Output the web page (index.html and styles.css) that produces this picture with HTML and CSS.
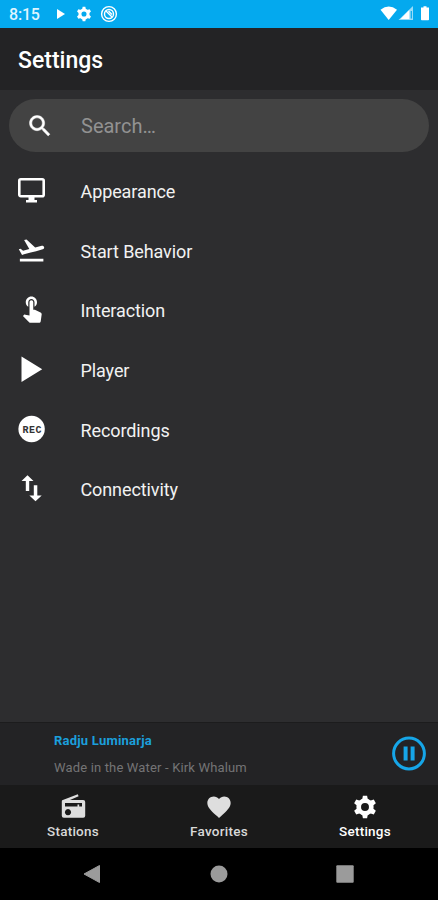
FILE: index.html
```html
<!DOCTYPE html>
<html lang="en">
<head>
<meta charset="utf-8">
<title>Settings</title>
<link rel="stylesheet" href="styles.css">
</head>
<body>
<div class="screen">
  <div class="status">
    <span class="clock">8:15</span>
    <svg class="s-play" width="10" height="12" viewBox="0 0 10 12"><path d="M1 1v10l8-5z"/></svg>
    <svg class="s-gear" width="18" height="18" viewBox="0 0 24 24"><use href="#gear"/></svg>
    <svg class="s-dnd" width="18" height="18" viewBox="0 0 18 18"><g fill="none" stroke="#fff"><circle cx="9" cy="9" r="7.400" stroke-width="1.400"/><circle cx="9" cy="9" r="4.500" stroke-width="1.400"/><path d="M6 6l6 6M8.500 6l3.500 3.500" stroke-width="1.400"/></g></svg>
    <svg class="s-signal" width="52" height="18" viewBox="0 0 52 18"><path d="M.5 4.800Q8.700-1.600 17 4.800L8.700 15z"/><path d="M33 1v14H18.500z" opacity=".6"/><path d="M29.300 5v9H20.500z"/><path d="M31.300 6v7.500" stroke="#04a9ee" stroke-width="1.200"/><path d="M41 2.600h2.500V1.200h3v1.400H49v11.900q0 .8-.8.800h-6.400q-.8 0-.8-.8z"/></svg>
  </div>
  <header class="header"><h1>Settings</h1></header>
  <main class="content">
    <div class="search">
      <svg width="28" height="28" viewBox="0 0 24 24"><path stroke="#fff" stroke-width=".4" d="M15.500 14h-.79l-.28-.27C15.410 12.590 16 11.110 16 9.500 16 5.910 13.090 3 9.500 3S3 5.910 3 9.500 5.910 16 9.500 16c1.610 0 3.090-.59 4.230-1.570l.27.28v.79l5 4.990L20.490 19l-4.990-5zm-6 0C7.010 14 5 11.990 5 9.500S7.010 5 9.500 5 14 7.010 14 9.500 11.990 14 9.500 14z"/></svg>
      <span>Search…</span>
    </div>
    <ul class="list">
      <li><svg width="30" height="30" viewBox="0 0 30 30"><rect x="3.300" y="4.300" width="24.400" height="17" rx="1.500" fill="none" stroke="#fff" stroke-width="2.600"/><path d="M12.500 22h6v3h2.500v2.400H10V25h2.500z"/></svg><span>Appearance</span></li>
      <li><svg width="30" height="30" viewBox="0 0 24 24"><path transform="translate(.4)" d="M2.700 19h18.800v2.100H2.700zm19.370-9.360c-.21-.8-1.040-1.280-1.840-1.060L14.920 10l-6.900-6.430-1.930.51 4.140 7.170-4.970 1.330-1.970-1.540-1.450.39 1.820 3.160.77 1.330 1.600-.43 5.310-1.420 4.350-1.160L21 11.490c.81-.23 1.280-1.050 1.070-1.850z"/></svg><span>Start Behavior</span></li>
      <li><svg width="30" height="30" viewBox="0 0 24 24"><path transform="translate(.8 -1)" d="M9 11.240V7.500C9 6.120 10.120 5 11.500 5S14 6.120 14 7.500v3.740c1.210-.81 2-2.180 2-3.740C16 5.010 13.990 3 11.500 3S7 5.010 7 7.500c0 1.560.79 2.930 2 3.740zm9.840 4.630l-4.540-2.260c-.17-.07-.35-.11-.54-.11H13v-6c0-.83-.67-1.500-1.500-1.500S10 6.670 10 7.500v10.740l-3.430-.72c-.08-.01-.15-.03-.24-.03-.31 0-.59.13-.79.33l-.79.8 4.940 4.940c.27.27.65.44 1.060.44h6.790c.75 0 1.330-.55 1.440-1.280l.75-5.270c.01-.07.02-.14.02-.2 0-.62-.38-1.160-.91-1.380z"/></svg><span>Interaction</span></li>
      <li><svg width="30" height="30" viewBox="0 0 30 30"><path d="M5.500 2.500v25.600L26.200 15.300z"/></svg><span>Player</span></li>
      <li><svg width="30" height="30" viewBox="0 0 30 30"><circle cx="15.600" cy="15" r="13.200"/><text class="rec" x="15.900" y="18.800" text-anchor="middle" textLength="19" lengthAdjust="spacing">REC</text></svg><span>Recordings</span></li>
      <li><svg width="30" height="30" viewBox="0 0 30 30"><path d="M11.500 2.200l6 5.700h-4.300v10.100H9.800V7.900H5.500zM17.800 12.300h3.500v10.100h4.400L19.500 28.300l-6.100-5.900h4.400z"/></svg><span>Connectivity</span></li>
    </ul>
  </main>
  <section class="player">
    <div class="track"><div class="station">Radju Luminarja</div><div class="song">Wade in the Water - Kirk Whalum</div></div>
    <svg width="36" height="36" viewBox="0 0 36 36"><circle cx="18" cy="17.500" r="15.400" fill="none" stroke="#16a6e8" stroke-width="3"/><path fill="#16a6e8" d="M12.600 10.500h4v14h-4zM19.600 10.500h4v14h-4z"/></svg>
  </section>
  <nav class="tabs">
    <div class="tab"><svg width="28" height="28" viewBox="0 0 28 28"><path fill-rule="evenodd" d="M3.200 7.200L18.800 1.200l.8 2-8.600 3.800h13.200q2 0 2 2v13.700q0 2-2 2H4.800q-2 0-2-2V8.800q0-1.200.4-1.600zM6 10v3.400h12.500v-1.900h1.700v1.900H23V10zM9 16.100a3.100 3.100 0 1 0 .01 0z"/></svg><span>Stations</span></div>
    <div class="tab"><svg width="28" height="28" viewBox="0 0 24 24"><path d="M12 21.350l-1.450-1.320C5.400 15.360 2 12.280 2 8.500 2 5.420 4.420 3 7.500 3c1.740 0 3.410.81 4.500 2.090C13.090 3.810 14.760 3 16.500 3 19.580 3 22 5.420 22 8.500c0 3.780-3.400 6.860-8.550 11.540L12 21.350z"/></svg><span>Favorites</span></div>
    <div class="tab active"><svg width="28" height="28" viewBox="0 0 24 24"><g id="gear"><circle cx="12" cy="12" r="5.400" fill="none" stroke="#fff" stroke-width="4"/><path id="teeth" d="M10.200 2.300h3.600l.9 4.700H9.300zM10.200 21.700h3.600l.9-4.700H9.300z"/><use href="#teeth" transform="rotate(60 12 12)"/><use href="#teeth" transform="rotate(120 12 12)"/></g></svg><span>Settings</span></div>
  </nav>
  <div class="sysnav">
    <svg width="20" height="20" viewBox="0 0 20 20"><path d="M2 10l15.500-8.500v17z" stroke="#9b9b9b" stroke-linejoin="round"/></svg>
    <svg width="20" height="20" viewBox="0 0 20 20"><circle cx="10" cy="10" r="8.500"/></svg>
    <svg width="20" height="20" viewBox="0 0 20 20"><rect x="1.300" y="1.300" width="17.400" height="17.400" rx="1"/></svg>
  </div>
</div>
</body>
</html>
```
FILE: styles.css
```css
* { box-sizing: border-box; margin: 0; padding: 0; }
body { background: #2d2d2f; font-family: Roboto, sans-serif; color: #f2f2f2; }
svg { display: block; flex: none; fill: #fff; }
.screen { width: 438px; height: 900px; display: flex; flex-direction: column; overflow: hidden; }

.status { height: 28px; background: #04a9ee; display: flex; align-items: center; padding: 0 8px 0 9px; }
.clock { width: 46px; font-size: 16px; font-weight: 500; letter-spacing: -.2px; color: #dff5ff; }
.s-play { margin-left: 1px; }
.s-gear { margin-left: 9px; }
.s-dnd { margin-left: 7px; }
.s-signal { margin-left: auto; margin-right: -2px; }

.header { height: 62px; background: #232325; display: flex; align-items: center; padding: 3px 18px 0; }
.header h1 { font-size: 23px; font-weight: 500; line-height: 28px; color: #fff; }

.content { flex: 1; padding: 9px 9px 0; }
.search { height: 53px; border-radius: 27px; background: #434343; display: flex; align-items: center; padding-left: 17px; }
.search span { margin-left: 27px; font-size: 20px; color: #929292; }
.list { list-style: none; padding-top: 9px; }
.list li { height: 59.600px; display: flex; align-items: center; padding-left: 7px; }
.list li svg { margin-top: -1px; }
.list li span { margin-left: 34.500px; font-size: 18px; letter-spacing: -.1px; padding-top: 2px; }
.rec { font: bold 10px "Liberation Mono", monospace; fill: #333; }

.player { height: 63px; background: #232325; border-top: 1px solid #1c1c1d; display: flex; align-items: center; justify-content: space-between; padding: 0 11px 0 54px; }
.station { font-size: 13px; font-weight: 700; line-height: 26px; letter-spacing: .22px; color: #1b9fdc; }
.song { font-size: 13px; line-height: 26px; letter-spacing: .16px; color: #747475; padding-top: 1px; }

.tabs { height: 63px; background: #1a1a1a; display: grid; grid-template-columns: repeat(3, 1fr); }
.tab { display: flex; flex-direction: column; align-items: center; padding-top: 8px; font-size: 13.500px; font-weight: 500; line-height: 18px; letter-spacing: .25px; color: #d8d8d8; }
.tab svg { fill: #dedede; }
.tab span { margin-top: 1px; }
.tab.active { color: #fff; }
.tab.active svg { fill: #fff; }

.sysnav { height: 52px; background: #000; display: flex; justify-content: space-between; align-items: center; padding: 0 83px 0 82px; }
.sysnav svg { fill: #9b9b9b; }
```
